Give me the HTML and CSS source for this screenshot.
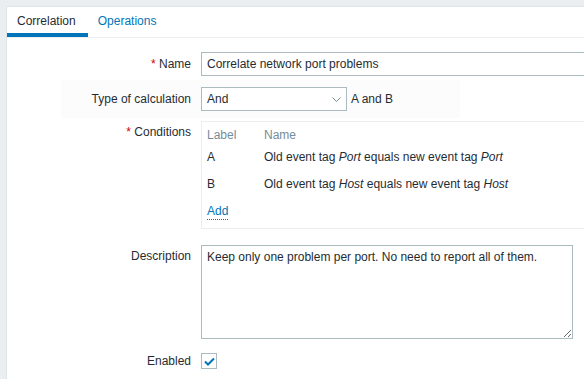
FILE: index.html
```html
<!DOCTYPE html>
<html lang="en">
<head>
    <meta charset="UTF-8">
    <meta name="viewport" content="width=device-width, initial-scale=1.0">
    <title>Event correlation</title>
    <link rel="stylesheet" href="styles.css">
</head>
<body>
    <div class="panel">
        <div class="tabs">
            <a class="tab active">Correlation</a>
            <a class="tab">Operations</a>
        </div>
        <div class="form">
            <div class="row row-name">
                <label class="label"><span class="req">*</span> Name</label>
                <div class="field field-wide">
                    <input type="text" class="input input-name" value="Correlate network port problems">
                </div>
            </div>
            <div class="row row-calc">
                <label class="label">Type of calculation</label>
                <div class="field">
                    <div class="select">
                        <span>And</span>
                        <svg class="chevron" width="9" height="5" viewBox="0 0 9 5"><path d="M0.5 0.5 L4.5 4.5 L8.5 0.5" fill="none" stroke="#768d99" stroke-width="1"/></svg>
                    </div>
                    <span class="formula">A and B</span>
                </div>
            </div>
            <div class="row row-cond">
                <label class="label label-top"><span class="req">*</span> Conditions</label>
                <div class="field field-wide">
                    <div class="cond-box">
                        <table class="cond">
                            <thead>
                                <tr><th class="col-label">Label</th><th>Name</th></tr>
                            </thead>
                            <tbody>
                                <tr><td>A</td><td>Old event tag <i>Port</i> equals new event tag <i>Port</i></td></tr>
                                <tr><td>B</td><td>Old event tag <i>Host</i> equals new event tag <i>Host</i></td></tr>
                                <tr><td colspan="2"><a class="link">Add</a></td></tr>
                            </tbody>
                        </table>
                    </div>
                </div>
            </div>
            <div class="row row-desc">
                <label class="label label-top">Description</label>
                <div class="field">
                    <textarea class="textarea">Keep only one problem per port. No need to report all of them.</textarea>
                </div>
            </div>
            <div class="row row-enabled">
                <label class="label">Enabled</label>
                <div class="field">
                    <span class="checkbox">
                        <svg width="11" height="9" viewBox="0 0 11 9"><path d="M1 4.5 L4 7.5 L10 1.5" fill="none" stroke="#0275b8" stroke-width="2"/></svg>
                    </span>
                </div>
            </div>
        </div>
    </div>
</body>
</html>
```

FILE: styles.css
```css
body {
    margin: 0;
    background-color: #ebeef0;
    font-family: "Liberation Sans", Arial, sans-serif;
    font-size: 12px;
    color: #1f2c33;
    overflow: hidden;
}
.panel {
    margin: 6px 0 0 6px;
    background-color: #fff;
    border: 1px solid #dfe4e7;
    border-right: none;
    border-bottom: none;
    height: calc(100vh - 7px);
}
.tabs {
    display: flex;
    border-bottom: 1px solid #ebeef0;
}
.tab {
    display: block;
    padding: 7px 12px 5px 10px;
    line-height: 14px;
    border-bottom: 4px solid transparent;
    color: #0275b8;
}
.tab.active {
    color: #1f2c33;
    border-bottom-color: #0275b8;
}
.form {
    padding-top: 14px;
}
.row {
    display: flex;
}
.label {
    width: 184px;
    margin-right: 10px;
    text-align: right;
    line-height: 24px;
    flex-shrink: 0;
}
.label-top {
    line-height: 14px;
    padding-top: 4px;
}
.req {
    color: #d40000;
}
.field {
    display: flex;
    align-items: center;
}
.field-wide {
    flex: 1;
    overflow: hidden;
}
.input {
    box-sizing: border-box;
    height: 24px;
    border: 1px solid #acbbc2;
    padding: 0 5px;
    font: inherit;
    color: inherit;
    outline: none;
}
.input-name {
    width: 420px;
    flex-shrink: 0;
}
.row-name {
    margin-bottom: 4px;
}
.row-calc {
    width: 453px;
    padding: 7px 0;
    background: linear-gradient(to right, transparent 54px, #fcfcfc 54px);
    margin-bottom: 3px;
}
.select {
    box-sizing: border-box;
    width: 146px;
    height: 24px;
    border: 1px solid #acbbc2;
    background-color: #fff;
    padding: 0 5px;
    display: flex;
    align-items: center;
    justify-content: space-between;
}
.formula {
    margin-left: 4px;
}
.cond-box {
    width: 420px;
    flex-shrink: 0;
    border: 1px solid #ebeef0;
    padding: 5px 5px 3px;
}
.cond {
    border-collapse: collapse;
}
.cond th {
    font-weight: normal;
    color: #768d99;
    text-align: left;
    line-height: 14px;
    padding: 1px 0 2px;
}
.cond td {
    line-height: 27px;
    padding: 0;
}
.col-label {
    width: 57px;
}
.link {
    color: #0275b8;
    text-decoration: none;
    border-bottom: 1px dotted #0275b8;
    padding-bottom: 1px;
}
.row-desc {
    margin-top: 16px;
}
.textarea {
    box-sizing: border-box;
    width: 372px;
    height: 94px;
    border: 1px solid #acbbc2;
    padding: 4px 5px;
    font: inherit;
    color: inherit;
    line-height: 14px;
    outline: none;
    margin: 0;
}
.row-enabled {
    margin-top: 14px;
}
.row-enabled .label {
    line-height: 16px;
}
.checkbox {
    box-sizing: border-box;
    width: 16px;
    height: 16px;
    border: 1px solid #acbbc2;
    display: flex;
    align-items: center;
    justify-content: center;
}
```
